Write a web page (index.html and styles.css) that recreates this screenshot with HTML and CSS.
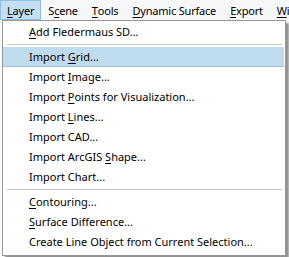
FILE: index.html
```html
<!DOCTYPE html>
<html>
<head>
<meta charset="utf-8">
<link rel="stylesheet" href="styles.css">
</head>
<body>
<div class="screen">
  <div class="menubar">
    <span class="mi active"><u>L</u>ayer</span>
    <span class="mi">S<u>c</u>ene</span>
    <span class="mi"><u>T</u>ools</span>
    <span class="mi"><u>D</u>ynamic Surface</span>
    <span class="mi"><u>E</u>xport</span>
    <span class="mi"><u>W</u>indow</span>
  </div>
  <div class="workspace"></div>
  <div class="popup">
    <div class="item"><u>A</u>dd Fledermaus SD...</div>
    <div class="sep"></div>
    <div class="item hl">Import <u>G</u>rid...</div>
    <div class="item">Import <u>I</u>mage...</div>
    <div class="item">Import <u>P</u>oints for Visualization...</div>
    <div class="item">Import <u>L</u>ines...</div>
    <div class="item">Import CAD...</div>
    <div class="item">Import ArcGIS <u>S</u>hape...</div>
    <div class="item">Import Chart...</div>
    <div class="sep"></div>
    <div class="item"><u>C</u>ontouring...</div>
    <div class="item"><u>S</u>urface Difference...</div>
    <div class="item">Create Line Object from Current Selection...</div>
  </div>
</div>
</body>
</html>
```

FILE: styles.css
```css
html, body {
  margin: 0;
  padding: 0;
  overflow: hidden;
}
body {
  font-family: "Noto Sans", "Open Sans", sans-serif;
  font-size: 11px;
  color: #000;
  background: #fff;
}
.screen {
  position: relative;
  width: 289px;
  height: 257px;
  overflow: hidden;
  display: flex;
  flex-direction: column;
}
u {
  text-decoration: underline;
  text-decoration-thickness: 1px;
  text-underline-offset: 2px;
}
.menubar {
  height: 20px;
  display: flex;
  align-items: stretch;
  background: #f6f7f8;
  white-space: nowrap;
  flex: none;
  letter-spacing: -0.2px;
}
.mi {
  display: flex;
  align-items: center;
  padding: 0 6px;
  margin-right: 0;
  border: 1px solid transparent;
  box-sizing: border-box;
  height: 20px;
}
.mi.active {
  background: #c4def2;
  border-color: #8cbde6;
}
.workspace {
  flex: 1;
  background: #fbfbfb;
}
.popup {
  position: absolute;
  left: 2px;
  top: 20px;
  width: 284px;
  box-sizing: border-box;
  border: 1px solid #979797;
  background: #fff;
  padding: 1px 0 3px;
  box-shadow: 3px 3px 2px rgba(0, 0, 0, 0.42);
  white-space: nowrap;
}
.item {
  height: 20px;
  line-height: 20px;
  padding-left: 26px;
  margin-right: 1px;
  box-sizing: border-box;
}
.item.hl {
  background: #bfdcef;
  border-bottom: 1px solid #9cc4dc;
  line-height: 19px;
}
.sep {
  height: 5px;
  margin: 0 3px 0 4px;
  display: flex;
  align-items: center;
}
.sep::before {
  content: "";
  flex: 1;
  height: 1px;
  background: #c4c4c4;
}
```
